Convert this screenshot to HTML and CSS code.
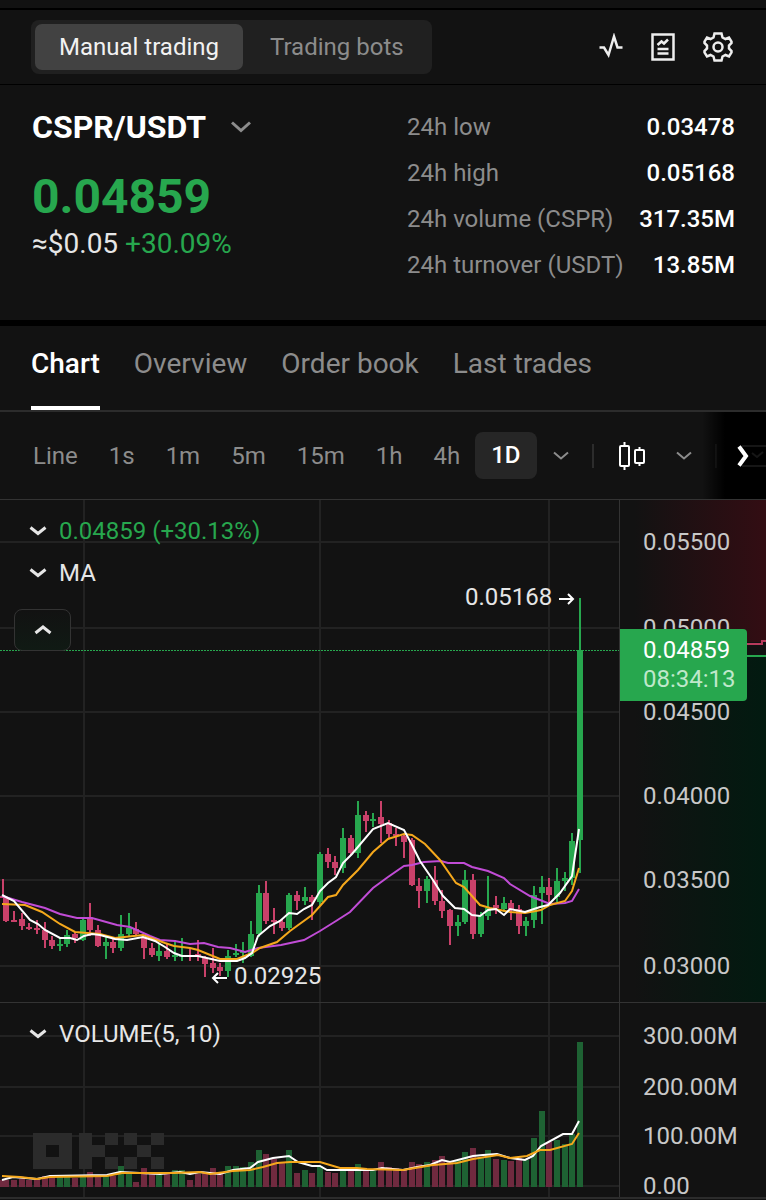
FILE: index.html
```html
<!DOCTYPE html>
<html lang="en">
<head>
	<meta charset="UTF-8">
	<meta name="viewport" content="width=device-width, initial-scale=1">
	<title>CSPR/USDT</title>
	<link rel="stylesheet" href="styles.css">
</head>
<body>

	<header id="topbar">
		<div class="switch">
			<button type="button" class="active">Manual trading</button>
			<button type="button">Trading bots</button>
		</div>
		<div class="tools">
			<button type="button" aria-label="Market activity">
				<svg width="24" height="28" viewBox="0 0 24 28"><path d="M0.500 14.500H5L9.500 22L15 3.500L18.500 14.500H23.500"/></svg>
			</button>
			<button type="button" aria-label="Orders">
				<svg width="24" height="28" viewBox="0 0 24 28"><path d="M1.500 1.500H22.500V26.500H1.500ZM6.500 20.500H17.500M6.500 16H17.500M6.500 12L10.500 8.500L13 10.500L17 6.500"/></svg>
			</button>
			<button type="button" aria-label="Settings">
				<svg width="30" height="30" viewBox="0 0 30 30"><path d="M11.500 1.500H18.500L19.500 5.500L22.500 7L26 5.500L28.500 9.500V11L26 13.500V16.500L28.500 19V20.500L26 24.500L22.500 23L19.500 24.500L18.500 28.500H11.500L10.500 24.500L7.500 23L4 24.500L1.500 20.500V19L4 16.500V13.500L1.500 11V9.500L4 5.500L7.500 7L10.500 5.500Z"/><circle cx="15" cy="15" r="4.500"/></svg>
			</button>
		</div>
	</header>

	<section id="summary">
		<div class="pair">
			<h1>
				<button type="button">CSPR/USDT
					<svg width="22" height="14" viewBox="0 0 22 14"><path d="M2 2.500L11 10.500L20 2.500"/></svg>
				</button>
			</h1>
			<p class="price">0.04859</p>
			<p class="fiat">≈$0.05 <span class="up">+30.09%</span></p>
		</div>
		<dl class="stats">
			<div><dt>24h low</dt><dd>0.03478</dd></div>
			<div><dt>24h high</dt><dd>0.05168</dd></div>
			<div><dt>24h volume (CSPR)</dt><dd>317.35M</dd></div>
			<div><dt>24h turnover (USDT)</dt><dd>13.85M</dd></div>
		</dl>
	</section>

	<nav id="tabs">
		<a href="#" class="active">Chart</a>
		<a href="#">Overview</a>
		<a href="#">Order book</a>
		<a href="#">Last trades</a>
	</nav>

	<div id="toolbar">
		<div class="periods">
			<button type="button">Line</button>
			<button type="button">1s</button>
			<button type="button">1m</button>
			<button type="button">5m</button>
			<button type="button">15m</button>
			<button type="button">1h</button>
			<button type="button">4h</button>
		</div>
		<button type="button" class="active">1D</button>
		<button type="button" aria-label="More periods"><svg width="16" height="10" viewBox="0 0 16 10"><path d="M1 1.500L8 7.500L15 1.500"/></svg></button>
		<i class="divider"></i>
		<button type="button" class="style" aria-label="Chart style">
			<svg width="28" height="30" viewBox="0 0 28 30"><rect x="2" y="5" width="9" height="20" rx="1"/><rect x="17" y="9" width="9" height="13" rx="1"/><path d="M6.500 1V5M6.500 25V29M21.500 6V9M21.500 22V25"/></svg>
		</button>
		<button type="button" aria-label="More styles"><svg width="16" height="10" viewBox="0 0 16 10"><path d="M1 1.500L8 7.500L15 1.500"/></svg></button>
		<i class="divider"></i>
		<button type="button" class="next" aria-label="Scroll right">
			<svg width="32" height="24" viewBox="0 0 32 24"><path class="ghost" d="M8 2H32M8 22H32M18 9L23 13L29 8"/><path d="M5 2.500L12 12L5 21.500"/></svg>
		</button>
	</div>

	<main id="chart">
		<section class="pane">
			<svg id="price-plot" class="plot"></svg>
			<div class="axis depth">
				<svg id="price-axis"></svg>
				<p class="tag">0.04859<span>08:34:13</span></p>
			</div>
			<div class="legend">
				<button type="button" class="up"><svg width="18" height="10" viewBox="0 0 18 10"><path d="M1.500 1.500L9 7.500L16.500 1.500"/></svg>0.04859 (+30.13%)</button>
				<button type="button"><svg width="18" height="10" viewBox="0 0 18 10"><path d="M1.500 1.500L9 7.500L16.500 1.500"/></svg>MA</button>
				<button type="button" class="fold" aria-label="Collapse"><svg width="18" height="10" viewBox="0 0 18 10"><path d="M1.500 8L9 2L16.500 8"/></svg></button>
			</div>
		</section>
		<section class="pane volume">
			<svg id="volume-plot" class="plot"></svg>
			<div class="axis"><svg id="volume-axis"></svg></div>
			<div class="legend">
				<button type="button"><svg width="18" height="10" viewBox="0 0 18 10"><path d="M1.500 1.500L9 7.500L16.500 1.500"/></svg>VOLUME(5, 10)</button>
			</div>
		</section>
	</main>

	<script src="chart.js"></script>
</body>
</html>
```
FILE: styles.css
```css
body{
	margin: 0;
	background: #121212;
	color: #fff;
	font: 24px/28px Roboto, "Liberation Sans", sans-serif;
}
h1, p, dl, dd{
	margin: 0;
}
button{
	padding: 0;
	border: 0;
	background: none;
	color: inherit;
	font: inherit;
	cursor: pointer;
}
a{
	color: inherit;
	text-decoration: none;
}
svg{
	display: block;
	fill: none;
	stroke: currentColor;
	stroke-width: 2;
}
.up{
	color: #27a74e;
}

/* top bar */
#topbar{
	display: flex;
	justify-content: space-between;
	align-items: center;
	margin-top: 8px;
	padding: 10px 33px 10px 31px;
	border-top: 2px solid #000;
	border-bottom: 1px solid #000;
}
.switch{
	display: flex;
	gap: 3px;
	padding: 4px;
	border-radius: 8px;
	background: #202020;
}
.switch button{
	padding: 9px 24px;
	border-radius: 7px;
	color: #8c8c8c;
}
.switch .active{
	background: #424242;
	color: #f2f2f2;
}
.tools{
	display: flex;
	align-items: center;
	gap: 28px;
	color: #eee;
}
.tools svg{
	stroke-width: 2.5;
}

/* pair and 24h stats */
#summary{
	display: flex;
	justify-content: space-between;
	padding: 26px 31px 25px 32px;
	border-bottom: 6px solid #000;
}
.pair h1{
	font-size: 32px;
	line-height: 32px;
	font-weight: 700;
}
.pair h1 button{
	display: flex;
	align-items: center;
	gap: 24px;
}
.pair h1 svg{
	color: #8c8c8c;
	stroke-width: 3;
}
.price{
	margin-top: 24px;
	font-size: 48px;
	line-height: 60px;
	font-weight: 700;
	color: #27a74e;
}
.fiat{
	font-size: 28px;
	line-height: 34px;
	color: #e6e6e6;
}
.stats{
	width: 328px;
}
.stats div{
	display: flex;
	justify-content: space-between;
	padding-bottom: 14px;
	line-height: 32px;
}
.stats dt{
	color: #8c8c8c;
}
.stats dd{
	font-weight: 500;
}

/* tabs */
#tabs{
	display: flex;
	gap: 34px;
	padding: 0 31px;
	border-bottom: 2px solid #2c2c2c;
	font-size: 28px;
	line-height: 32px;
	color: #8c8c8c;
}
#tabs a{
	padding: 22px 0 26px;
	border-bottom: 4px solid transparent;
}
#tabs .active{
	border-color: #fff;
	color: #fff;
	font-weight: 500;
}

/* chart toolbar */
#toolbar{
	position: relative;
	display: flex;
	align-items: center;
	padding: 20px 24px 20px 33px;
	overflow: hidden;
	color: #8c8c8c;
}
#toolbar > *{
	flex-shrink: 0;
}
#toolbar::after{
	content: "";
	position: absolute;
	top: 0;
	right: 0;
	bottom: 0;
	width: 64px;
	background: linear-gradient(to right, transparent, #000 36%);
}
.periods{
	display: flex;
	gap: 31px;
	margin-right: 15px;
}
#toolbar > .active{
	margin-right: 16px;
	padding: 9px 16px 10px;
	border-radius: 8px;
	background: #262626;
	color: #fff;
	font-weight: 500;
}
.divider{
	width: 2px;
	height: 24px;
	margin: 0 24px 0 23px;
	background: #2c2c2c;
}
#toolbar .style{
	margin-right: 30px;
	color: #fff;
}
#toolbar .next{
	position: absolute;
	right: 0;
	z-index: 1;
	color: #fff;
}
.next svg{
	stroke-width: 4;
}
.next .ghost{
	stroke: #161616;
	stroke-width: 2;
}

/* chart */
.pane{
	position: relative;
	display: flex;
	height: 502px;
	border-top: 1px solid #333;
}
.pane.volume{
	height: 194px;
	border-bottom: 2px solid #2c2c2c;
}
.plot{
	flex: 1;
	min-width: 0;
	height: 100%;
}
.axis{
	position: relative;
	width: 146px;
	border-left: 1px solid #333;
}
.axis svg{
	width: 100%;
	height: 100%;
}
.axis text,
.plot text{
	font-size: 24px;
	fill: #c8c8c8;
	stroke: none;
}
.plot text{
	fill: #e6e6e6;
}
.depth{
	background:
		linear-gradient(to right, #121212 10%, transparent),
		linear-gradient(to bottom, #330d13 142px, #121212 142px, #121212 156px, #021a10 156px);
}
.tag{
	position: absolute;
	top: 129px;
	left: 0;
	padding: 7px 11px 7px 23px;
	border-radius: 0 4px 4px 0;
	background: #27a74e;
	line-height: 29px;
}
.tag span{
	display: block;
	color: #bfe8cb;
}
.legend{
	position: absolute;
	top: 17px;
	left: 14px;
	display: flex;
	flex-direction: column;
	align-items: flex-start;
	gap: 14px;
}
.legend button{
	display: flex;
	align-items: center;
	gap: 12px;
	padding-left: 15px;
	color: #e6e6e6;
}
.legend svg{
	stroke: #e6e6e6;
	stroke-width: 3;
}
.legend .up{
	color: #27a74e;
}
.legend .fold{
	justify-content: center;
	width: 57px;
	height: 42px;
	margin-top: 8px;
	padding: 0;
	border: 1px solid #333;
	border-radius: 8px;
	background: linear-gradient(to bottom, #121212, #101a14);
}

.grid{
	stroke: #222;
}
.last{
	stroke: #27a74e;
	stroke-width: 1;
	stroke-dasharray: 2 1;
}
.rise{
	fill: #27a74e;
}
.fall{
	fill: #c9416a;
}
.volume .rise{
	fill: #1e6233;
}
.volume .fall{
	fill: #702a3f;
}
.rise, .fall, .mark{
	stroke: none;
}
.mark{
	fill: #2b2b2b;
}
.ma-short{
	stroke: #fff;
}
.ma-mid{
	stroke: #f5a81c;
}
.ma-long{
	stroke: #c14cd6;
}
.ask{
	stroke: #b83a5c;
}
```
FILE: chart.js
```js
// candle: [up, high, body top, body bottom, low, volume]
var candles = [
	[0,379,396,398,398,7],[0,397,398,421,422,7],[0,411,420,422,422,7],[0,413,419,426,430,8],[0,423,427,429,430,7],
	[0,420,428,430,434,8],[0,422,430,440,448,11],[0,436,440,446,449,12],[1,438,444,446,451,12],[1,430,435,444,447,12],
	[0,432,434,438,443,9],[1,417,420,440,441,11],[0,403,419,430,436,15],[0,425,430,446,447,11],[1,436,442,446,459,11],
	[0,438,442,448,453,11],[1,415,434,448,451,21],[1,413,428,434,436,14],[0,422,429,434,436,5],[0,437,438,448,459,19],
	[0,443,448,455,457,15],[1,443,451,456,461,12],[0,443,451,457,459,15],[1,440,455,457,461,17],[1,438,455,457,461,17],
	[0,448,455,457,461,7],[0,440,454,457,461,13],[0,456,458,464,477,15],[0,448,463,468,473,19],[0,463,467,471,476,15],
	[1,450,456,471,477,21],[1,444,453,455,457,21],[1,442,451,453,463,20],[1,421,434,456,457,25],[1,385,393,434,437,37],
	[0,381,393,421,424,33],[0,408,420,422,434,28],[0,419,422,428,431,25],[1,393,395,428,430,37],[0,391,395,401,410,14],
	[1,387,397,401,405,17],[0,395,397,402,420,14],[1,352,354,402,406,21],[0,348,354,362,368,15],[0,356,362,368,375,14],
	[1,328,338,368,373,17],[0,335,338,353,355,16],[1,301,315,353,358,23],[0,311,315,321,332,18],[1,313,319,321,327,16],
	[0,301,317,324,343,25],[0,320,323,334,338,20],[0,328,334,336,346,19],[0,335,336,342,358,18],[0,338,340,385,386,25],
	[0,378,386,391,408,23],[1,376,379,391,403,25],[0,366,380,401,405,27],[0,390,401,411,418,31],[0,409,410,426,445,26],
	[1,415,422,426,436,27],[1,370,380,422,424,35],[0,374,380,434,439,39],[1,412,415,434,437,30],[1,376,408,416,420,37],
	[0,396,405,408,414,28],[1,397,403,409,412,27],[0,400,403,409,420,26],[0,405,409,426,434,29],[1,417,421,426,436,27],
	[1,386,395,420,428,49],[1,376,387,393,424,76],[0,378,387,395,404,45],[1,368,381,397,402,47],[1,372,378,381,391,43],
	[1,333,341,378,385,53],[1,98,150,340,373,145]
];

var priceMA = {
	"ma-long": "2,396 22,402 45,408 60,414 77,418 92,418 117,425 130,427 150,436 160,440 175,441 190,444 204,443 218,447 230,448 245,452 258,448 281,445 304,440 320,431 336,421 350,412 373,388 388,377 404,366 412,365 424,362 441,361 448,363 464,363 472,367 488,371 504,378 510,384 530,396 550,404 565,403 572,401 579,389",
	"ma-mid": "2,404 25,405 42,412 60,424 75,432 100,434 115,438 143,435 165,443 174,446 190,448 198,450 220,459 237,459 252,453 260,448 277,442 290,431 312,415 320,406 328,397 336,395 343,385 358,370 373,352 388,339 404,334 412,335 425,344 440,360 456,383 464,387 480,405 490,408 510,412 525,413 541,410 550,405 565,401 572,391 579,368",
	"ma-short": "2,395 14,401 30,420 38,424 45,430 60,438 70,438 77,440 84,436 92,434 100,435 115,439 127,440 143,437 155,441 165,447 174,453 182,456 198,456 220,461 237,461 245,458 252,453 258,436 270,426 280,421 289,413 297,414 304,409 312,405 320,391 328,383 336,377 343,363 352,354 373,329 388,323 404,330 412,345 420,361 433,380 443,396 455,408 464,409 472,415 480,416 488,410 496,409 504,415 510,409 525,412 540,407 548,405 560,393 572,376 579,329"
};
var volumeMA = {
	"ma-short": "2,177 13,174 37,176 50,173 107,172 120,169 160,171 180,169 190,171 200,169 220,171 233,167 250,165 258,159 273,155 289,153 298,159 312,163 320,163 327,167 373,167 382,165 403,167 417,164 430,162 442,157 450,159 473,153 483,152 497,151 510,155 525,157 533,153 541,143 563,131 572,131 579,118",
	"ma-mid": "2,173 20,174 37,176 50,174 107,173 122,170 173,170 200,169 210,171 233,168 250,167 263,164 277,160 290,159 320,159 340,165 357,165 367,166 403,167 433,162 457,160 473,156 498,152 510,155 527,153 540,147 550,147 572,141 579,130"
};

var RIGHT = 619, STEP = 7.65, LAST = 580;
var timeLines = [84, 320, 549];
var priceLines = [[42, "0.05500"], [128, "0.05000"], [212, "0.04500"], [296, "0.04000"], [380, "0.03500"], [466, "0.03000"]];
var volumeLines = [[33, "300.00M"], [84, "200.00M"], [133, "100.00M"], [183, "0.00"]];

function gi(id) {
	return document.getElementById(id);
}
function rect(cls, x, y, w, h) {
	return '<rect class="' + cls + '" x="' + x + '" y="' + y + '" width="' + w + '" height="' + h + '"/>';
}
function path(cls, d) {
	return '<path class="' + cls + '" fill-rule="evenodd" d="' + d + '"/>';
}
function label(x, y, text) {
	return '<text x="' + x + '" y="' + y + '">' + text + '</text>';
}
function xOf(i) {
	return Math.max(3, Math.round(LAST - (candles.length - 1 - i) * STEP));
}
function grid(lines, left, height) {
	var html = "";
	lines.forEach(function (line) {
		html += path("grid", "M" + left + " " + line[0] + "H" + RIGHT);
	});
	timeLines.forEach(function (x) {
		html += path("grid", "M" + x + " 0V" + height);
	});
	return html;
}
function averages(set) {
	return Object.keys(set).map(function (cls) {
		return '<polyline class="' + cls + '" points="' + set[cls] + '"/>';
	}).join("");
}
// newest candle stays next to the axis, a wider window shows more room on the left
function fit(svg) {
	var box = svg.getBoundingClientRect(),
		left = RIGHT - box.width;
	svg.setAttribute("viewBox", left + " 0 " + box.width + " " + box.height);
	return left;
}

function drawPrice() {
	var svg = gi("price-plot"),
		left = fit(svg),
		html = grid(priceLines, left, 502);
	html += path("last", "M" + left + " 150.5H" + RIGHT);
	candles.forEach(function (c, i) {
		var x = xOf(i), cls = c[0] ? "rise" : "fall";
		html += rect(cls, x - 1, c[1], 2, c[4] - c[1]);
		html += rect(cls, x - 3, c[2], 6, c[3] - c[2]);
	});
	html += averages(priceMA);
	html += label(465, 105, "0.05168") + path("", "M559 99H573M568 94L573 99L568 104");
	html += label(234, 484, "0.02925") + path("", "M227 478H213M218 473L213 478L218 483");
	svg.innerHTML = html;
}
function drawVolume() {
	var svg = gi("volume-plot"),
		html = grid(volumeLines, fit(svg), 195);
	candles.forEach(function (c, i) {
		html += rect(c[0] ? "rise" : "fall", xOf(i) - 3, 184 - c[5], 6, c[5]);
	});
	// watermark
	html += path("mark", "M33 130H72V166H33ZM46 142V154H59V142Z");
	html += path("mark", "M79 130H92V142H105V130H118V142H105V154H118V166H105V154H92V166H79Z");
	html += path("mark", "M124 130H137V142H151V130H164V142H151V154H164V166H151V154H137V166H124V154H137V142H124Z");
	html += averages(volumeMA);
	svg.innerHTML = html;
}
function drawAxis(id, lines) {
	gi(id).innerHTML = lines.map(function (line) {
		return label(23, line[0] + 8, line[1]);
	}).join("");
}

function draw() {
	drawPrice();
	drawVolume();
}
drawAxis("price-axis", priceLines);
drawAxis("volume-axis", volumeLines);
gi("price-axis").innerHTML += path("ask", "M127 144H142V141H147") + path("up", "M127 156H147");
window.onresize = draw;
draw();
```
